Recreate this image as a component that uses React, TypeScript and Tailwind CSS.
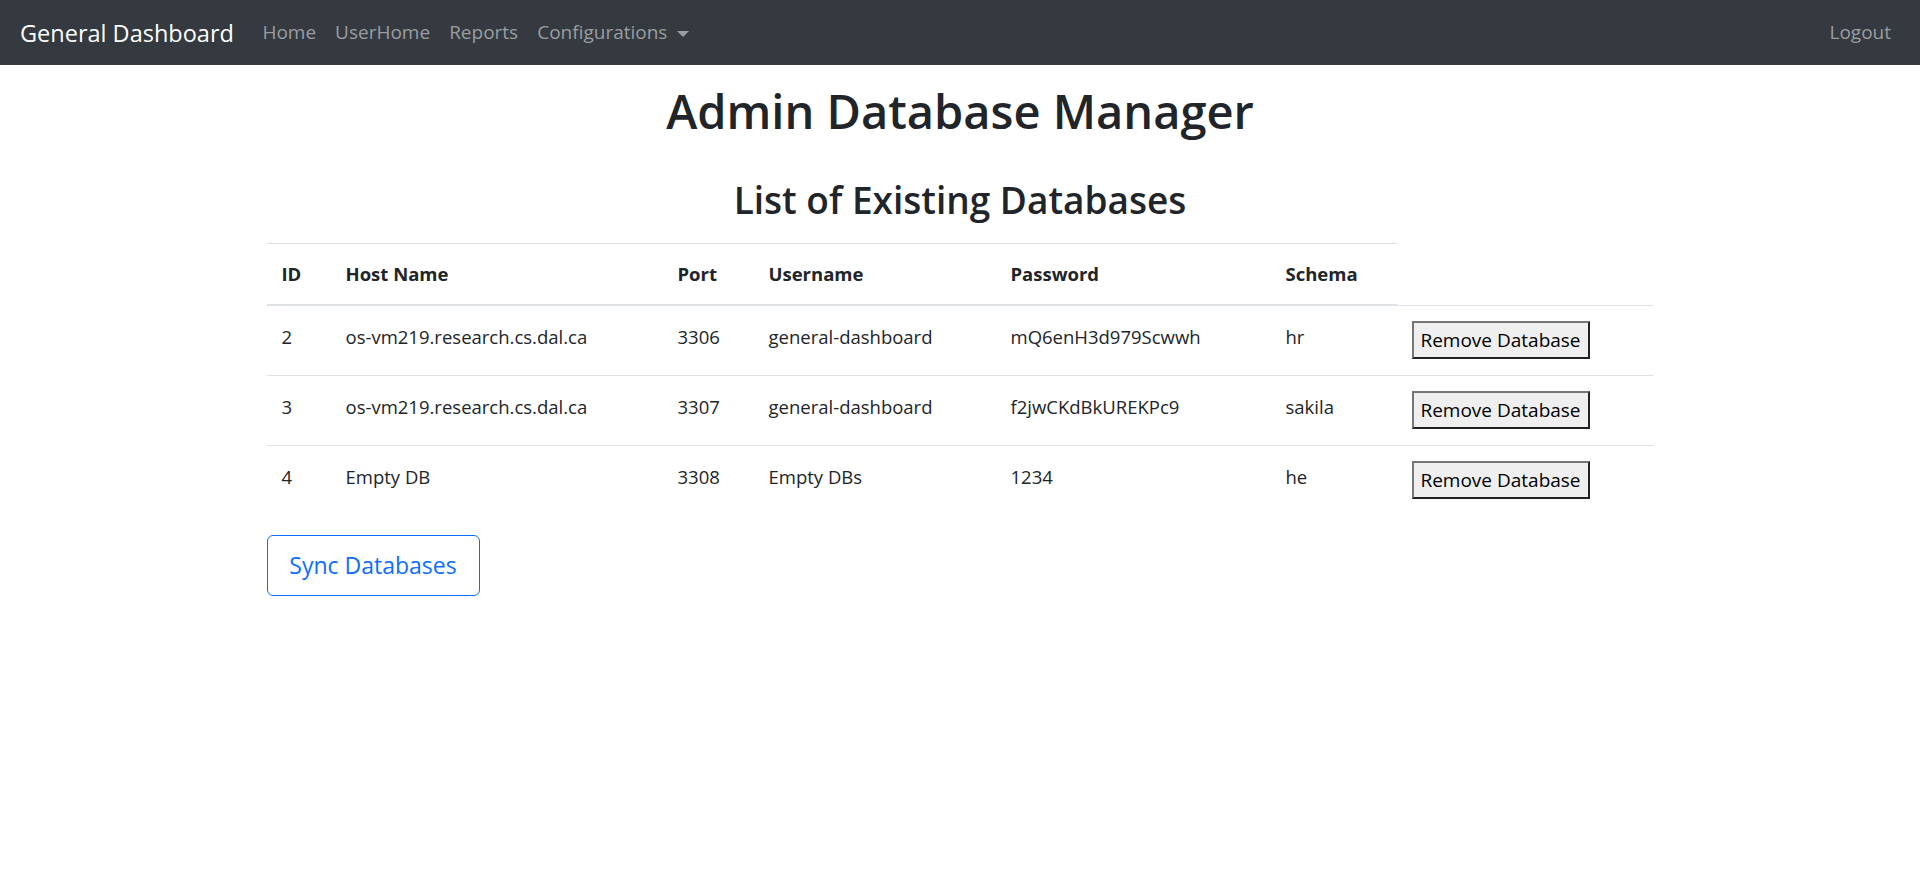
import React from "react";

const DATABASES = [
  { id: 2, host: "os-vm219.research.cs.dal.ca", port: 3306, user: "general-dashboard", password: "mQ6enH3d979Scwwh", schema: "hr" },
  { id: 3, host: "os-vm219.research.cs.dal.ca", port: 3307, user: "general-dashboard", password: "f2jwCKdBkUREKPc9", schema: "sakila" },
  { id: 4, host: "Empty DB", port: 3308, user: "Empty DBs", password: "1234", schema: "he" },
];

function Navbar() {
  return (
    <nav className="flex h-[65px] items-center bg-[#343a40] pl-[20px] pr-[29px]">
      <a className="text-[23.5px] leading-[36px] text-white">General Dashboard</a>
      <div className="ml-[19px] flex items-center text-[19px] text-[#9a9da0]">
        <a className="px-[9.5px]">Home</a>
        <a className="px-[9.5px]">UserHome</a>
        <a className="px-[9.5px]">Reports</a>
        <a className="flex items-center px-[9.5px]">
          Configurations
          <span className="ml-[10px] mt-[2px] inline-block h-0 w-0 border-x-[6px] border-t-[6px] border-x-transparent border-t-[#9a9da0]" />
        </a>
      </div>
      <a className="ml-auto text-[19px] text-[#9a9da0]">Logout</a>
    </nav>
  );
}

export default function App() {
  return (
    <div className="min-h-screen bg-white font-['Open_Sans',sans-serif] text-[#212529]">
      <Navbar />
      <main className="mx-auto w-[1387px]">
        <h1 className="mt-[16px] text-center text-[47px] leading-[60px] font-semibold">Admin Database Manager</h1>
        <h2 className="mt-[35px] text-center text-[37px] leading-[48px] font-semibold">List of Existing Databases</h2>
        <table className="mt-[19px] w-[1387px] table-fixed border-collapse text-left text-[18.5px] leading-[30px]">
          <colgroup>
            <col className="w-[64px]" />
            <col className="w-[332px]" />
            <col className="w-[91px]" />
            <col className="w-[242px]" />
            <col className="w-[275px]" />
            <col className="w-[126px]" />
            <col className="w-[257px]" />
          </colgroup>
          <thead>
            <tr>
              {["ID", "Host Name", "Port", "Username", "Password", "Schema"].map((h) => (
                <th key={h} className="border-t border-b-2 border-[#dee2e6] px-[15px] py-[15px] font-bold">
                  {h}
                </th>
              ))}
            </tr>
          </thead>
          <tbody>
            {DATABASES.map((db) => (
              <tr key={db.id} className="h-[70px]">
                <td className="border-t border-[#dee2e6] px-[15px] py-[16px] align-top">{db.id}</td>
                <td className="border-t border-[#dee2e6] px-[15px] py-[16px] align-top">{db.host}</td>
                <td className="border-t border-[#dee2e6] px-[15px] py-[16px] align-top">{db.port}</td>
                <td className="border-t border-[#dee2e6] px-[15px] py-[16px] align-top">{db.user}</td>
                <td className="border-t border-[#dee2e6] px-[15px] py-[16px] align-top">{db.password}</td>
                <td className="border-t border-[#dee2e6] px-[15px] py-[16px] align-top">{db.schema}</td>
                <td className="border-t border-[#dee2e6] px-[15px] pt-[15px] pb-[16px] align-top">
                  <button className="h-[38px] w-[178px] border-2 border-t-[#767676] border-l-[#767676] border-r-[#222] border-b-[#222] bg-[#efefef] text-[19px] text-black">
                    Remove Database
                  </button>
                </td>
              </tr>
            ))}
          </tbody>
        </table>
        <button className="mt-[20px] h-[61px] w-[213px] rounded-[6px] border border-[#0d6efd] text-[23px] text-[#0d6efd]">
          Sync Databases
        </button>
      </main>
    </div>
  );
}
